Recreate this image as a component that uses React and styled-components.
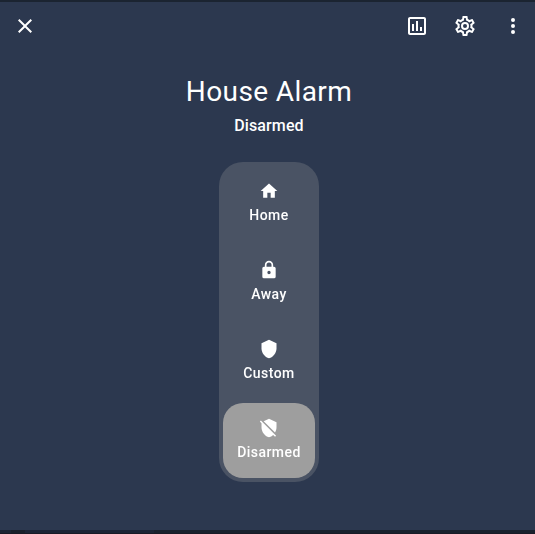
import React from "react";
import styled, { createGlobalStyle } from "styled-components";

const GlobalStyle = createGlobalStyle`
  * { box-sizing: border-box; }
  html, body { margin: 0; background: #1a212d; overflow: hidden; }
`;

const Backdrop = styled.div`
  width: 100vw;
  height: 534px;
  padding-top: 2px;
  overflow: hidden;
  background: #1b2431;
  font-family: Roboto, sans-serif;
  color: #fff;
`;

const Dialog = styled.main`
  width: 538px;
  height: 528px;
  padding: 0 1px;
  background: #2c384f;
`;

const PageEdge = styled.div`
  height: 4px;
  border-bottom: 1px solid #191b26;
  background: linear-gradient(
    90deg,
    #1c2534 11px,
    #19202b 11px 25px,
    #1c2536 25px 154px,
    #19212d 154px
  );
`;

const Header = styled.header`
  display: flex;
  height: 48px;
`;

const IconButton = styled.button`
  display: grid;
  place-items: center;
  width: 48px;
  height: 48px;
  padding: 0;
  border: 0;
  background: none;
  color: inherit;
`;

const CloseButton = styled(IconButton)`
  margin-right: auto;
`;

const Content = styled.section`
  display: flex;
  flex-direction: column;
  align-items: center;
  padding-top: 24px;
`;

const Title = styled.h1`
  margin: 0;
  font-size: 28px;
  font-weight: 400;
  line-height: 36px;
  letter-spacing: 0.4px;
`;

const State = styled.p`
  margin: 4px 0 0;
  font-size: 16px;
  font-weight: 500;
  line-height: 24px;
  letter-spacing: 0.1px;
`;

const ModeList = styled.div`
  display: flex;
  flex-direction: column;
  gap: 4px;
  width: 100px;
  height: 320px;
  margin-top: 24px;
  padding: 4px;
  border-radius: 24px;
  background: #4a5364;
`;

const ModeButton = styled.button`
  display: flex;
  flex: 1;
  flex-direction: column;
  align-items: center;
  gap: 4px;
  padding: 15px 0 0;
  border: 0;
  border-radius: 20px;
  background: ${({ $active }) => ($active ? "#9e9e9e" : "transparent")};
  color: #fff;
  font: 500 14px/20px Roboto, sans-serif;
  letter-spacing: 0.45px;
  will-change: transform;
`;

const Svg = styled.svg`
  display: block;
  width: ${({ $size }) => $size}px;
  height: ${({ $size }) => $size}px;
  fill: currentColor;
`;

const paths = {
  close:
    "M19,6.41L17.59,5L12,10.59L6.41,5L5,6.41L10.59,12L5,17.59L6.41,19L12,13.41L17.59,19L19,17.59L13.41,12L19,6.41Z",
  chart:
    "M9 17H7V10H9V17M13 17H11V7H13V17M17 17H15V13H17V17M19 19H5V5H19V19.1M19 3H5C3.9 3 3 3.9 3 5V19C3 20.1 3.9 21 5 21H19C20.1 21 21 20.1 21 19V5C21 3.9 20.1 3 19 3Z",
  cog:
    "M12,8A4,4 0 0,1 16,12A4,4 0 0,1 12,16A4,4 0 0,1 8,12A4,4 0 0,1 12,8M12,10A2,2 0 0,0 10,12A2,2 0 0,0 12,14A2,2 0 0,0 14,12A2,2 0 0,0 12,10M10,22C9.75,22 9.54,21.82 9.5,21.58L9.13,18.93C8.5,18.68 7.96,18.34 7.44,17.94L4.95,18.95C4.73,19.03 4.46,18.95 4.34,18.73L2.34,15.27C2.21,15.05 2.27,14.78 2.46,14.63L4.57,12.97L4.5,12L4.57,11L2.46,9.37C2.27,9.22 2.21,8.95 2.34,8.73L4.34,5.27C4.46,5.05 4.73,4.96 4.95,5.05L7.44,6.05C7.96,5.66 8.5,5.32 9.13,5.07L9.5,2.42C9.54,2.18 9.75,2 10,2H14C14.25,2 14.46,2.18 14.5,2.42L14.87,5.07C15.5,5.32 16.04,5.66 16.56,6.05L19.05,5.05C19.27,4.96 19.54,5.05 19.66,5.27L21.66,8.73C21.79,8.95 21.73,9.22 21.54,9.37L19.43,11L19.5,12L19.43,13L21.54,14.63C21.73,14.78 21.79,15.05 21.66,15.27L19.66,18.73C19.54,18.95 19.27,19.04 19.05,18.95L16.56,17.95C16.04,18.34 15.5,18.68 14.87,18.93L14.5,21.58C14.46,21.82 14.25,22 14,22H10M11.25,4L10.88,6.61C9.68,6.86 8.62,7.5 7.85,8.39L5.44,7.35L4.69,8.65L6.8,10.2C6.4,11.37 6.4,12.64 6.8,13.8L4.68,15.36L5.43,16.66L7.86,15.62C8.63,16.5 9.68,17.14 10.87,17.38L11.24,20H12.76L13.13,17.39C14.32,17.14 15.37,16.5 16.14,15.62L18.57,16.66L19.32,15.36L17.2,13.81C17.6,12.64 17.6,11.37 17.2,10.2L19.31,8.65L18.56,7.35L16.15,8.39C15.38,7.5 14.32,6.86 13.12,6.62L12.75,4H11.25Z",
  dots:
    "M12,16A2,2 0 0,1 14,18A2,2 0 0,1 12,20A2,2 0 0,1 10,18A2,2 0 0,1 12,16M12,10A2,2 0 0,1 14,12A2,2 0 0,1 12,14A2,2 0 0,1 10,12A2,2 0 0,1 12,10M12,4A2,2 0 0,1 14,6A2,2 0 0,1 12,8A2,2 0 0,1 10,6A2,2 0 0,1 12,4Z",
  home: "M10,20V14H14V20H19V12H22L12,3L2,12H5V20H10Z",
  lock:
    "M12,17A2,2 0 0,0 14,15C14,13.89 13.1,13 12,13A2,2 0 0,0 10,15A2,2 0 0,0 12,17M18,8A2,2 0 0,1 20,10V20A2,2 0 0,1 18,22H6A2,2 0 0,1 4,20V10C4,8.89 4.9,8 6,8H7V6A5,5 0 0,1 12,1A5,5 0 0,1 17,6V8H18M12,3A3,3 0 0,0 9,6V8H15V6A3,3 0 0,0 12,3Z",
  shield: "M12,1L3,5V11C3,16.55 6.84,21.74 12,23C17.16,21.74 21,16.55 21,11V5L12,1Z",
  shieldOff:
    "M1,4.27L2.28,3L20.5,21.22L19.23,22.5L17,20.25C15.57,21.59 13.87,22.54 12,23C6.84,21.74 3,16.55 3,11V6.27L1,4.27M12,1L21,5V11C21,13.28 20.35,15.5 19.23,17.41L5.65,3.82L12,1Z",
};

const modes = [
  { label: "Home", icon: "home" },
  { label: "Away", icon: "lock" },
  { label: "Custom", icon: "shield" },
  { label: "Disarmed", icon: "shieldOff" },
];

function Icon({ name, size = 24 }) {
  return (
    <Svg $size={size} viewBox="0 0 24 24" aria-hidden="true">
      <path d={paths[name]} />
    </Svg>
  );
}

export default function App() {
  const current = "Disarmed";
  return (
    <>
      <GlobalStyle />
      <Backdrop>
        <Dialog>
          <Header>
            <CloseButton aria-label="Close"><Icon name="close" /></CloseButton>
            <IconButton aria-label="History"><Icon name="chart" /></IconButton>
            <IconButton aria-label="Settings"><Icon name="cog" /></IconButton>
            <IconButton aria-label="More options"><Icon name="dots" /></IconButton>
          </Header>
          <Content>
            <Title>House Alarm</Title>
            <State>{current}</State>
            <ModeList>
              {modes.map(({ label, icon }) => (
                <ModeButton key={label} $active={label === current}>
                  <Icon name={icon} size={20} />
                  {label}
                </ModeButton>
              ))}
            </ModeList>
          </Content>
        </Dialog>
        <PageEdge />
      </Backdrop>
    </>
  );
}
